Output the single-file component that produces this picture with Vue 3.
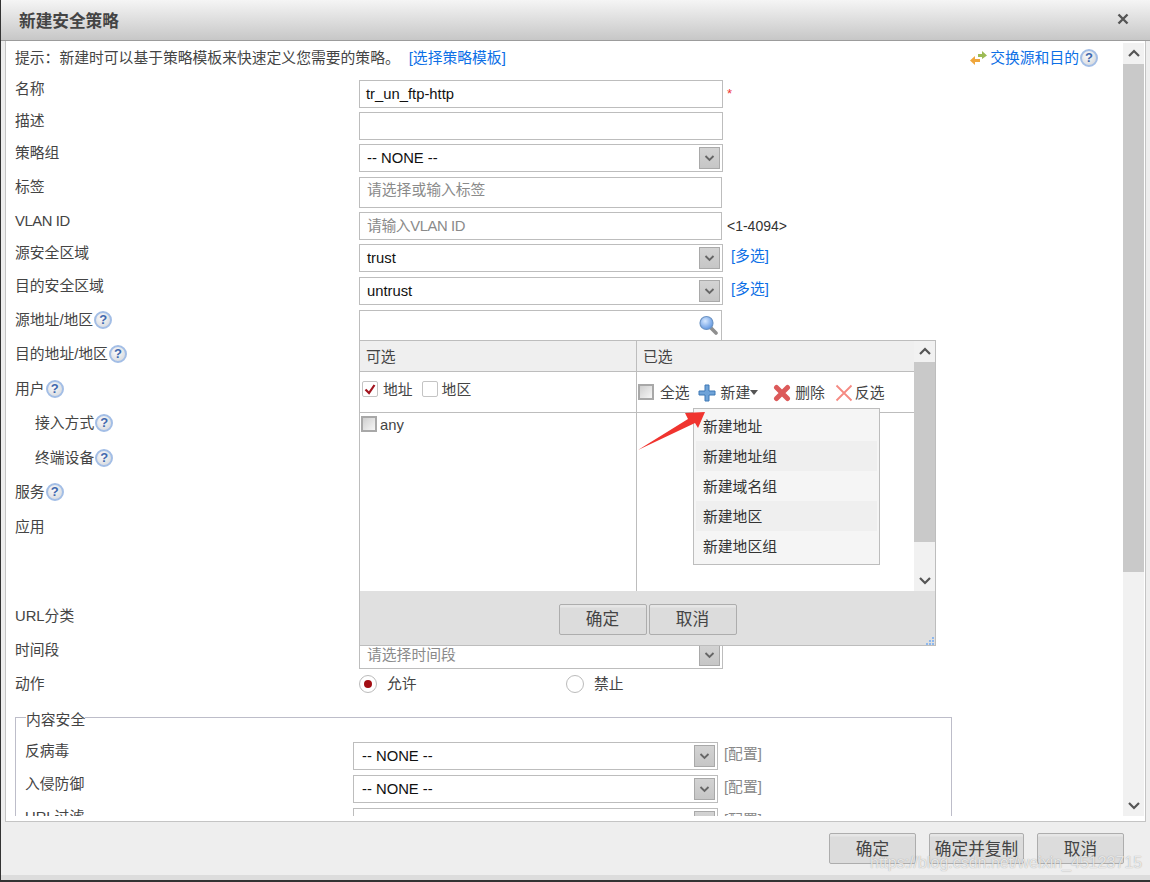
<script setup>
const rows = [
  { label: '名称', h: 32, type: 'input', value: 'tr_un_ftp-http', star: true },
  { label: '描述', h: 32, type: 'input', value: '' },
  { label: '策略组', h: 33, type: 'select', value: '-- NONE --' },
  { label: '标签', h: 35, type: 'tall', placeholder: '请选择或输入标签', low: true },
  { label: 'VLAN ID', h: 32, type: 'short', placeholder: '请输入VLAN ID', note: '<1-4094>', tight: true },
  { label: '源安全区域', h: 33, type: 'select', value: 'trust', multi: true },
  { label: '目的安全区域', h: 33, type: 'select', value: 'untrust', multi: true },
  { label: '源地址/地区', h: 35, type: 'search', help: true, low: true },
  { label: '目的地址/地区', h: 35, help: true },
  { label: '用户', h: 34, help: true },
  { label: '接入方式', h: 35, help: true, indent: true },
  { label: '终端设备', h: 34, help: true, indent: true },
  { label: '服务', h: 35, help: true },
  { label: '应用', h: 89 },
  { label: 'URL分类', h: 34 },
  { label: '时间段', h: 34, type: 'select', placeholder: '请选择时间段' },
  { label: '动作', h: 35, type: 'radio' }
]
const security = [
  { label: '反病毒', value: '-- NONE --' },
  { label: '入侵防御', value: '-- NONE --' },
  { label: 'URL过滤', value: '' }
]
const menu = ['新建地址', '新建地址组', '新建域名组', '新建地区', '新建地区组']
</script>

<template>
  <div class="dialog">
    <header class="title">
      <span>新建安全策略</span>
      <svg class="close" width="12" height="12" viewBox="0 0 12 12"><path d="M1.5 1.5l9 9M10.5 1.5l-9 9" stroke="#555" stroke-width="2.4" /></svg>
    </header>

    <div class="body">
      <div class="scroll">
        <div class="hint">
          <span>提示：新建时可以基于策略模板来快速定义您需要的策略。<a class="link tpl">[选择策略模板]</a></span>
          <span class="swap">
            <svg width="19" height="16" viewBox="0 0 19 16">
              <path d="M9 4h4V1l5 4.500-5 3.500V7H9z" fill="#9dbb55" />
              <path d="M11 9H6V6L1 10.500 6 15v-3h5z" fill="#efa63c" />
            </svg>
            <a class="link">交换源和目的</a><i class="help">?</i>
          </span>
        </div>

        <div v-for="row in rows" :key="row.label" class="row" :style="{ height: row.h + 'px' }">
          <div class="label" :class="{ low: row.low, indent: row.indent, tight: row.tight }">{{ row.label }}<i v-if="row.help" class="help">?</i></div>

          <template v-if="row.type === 'input'">
            <div class="box wide">{{ row.value }}</div>
            <span v-if="row.star" class="star">*</span>
          </template>

          <template v-else-if="row.type === 'select'">
            <div class="box wide select" :class="{ ph: row.placeholder }">
              {{ row.value || row.placeholder }}
              <span class="drop"><svg width="11" height="7" viewBox="0 0 11 7"><path d="M1.500 1l4 4 4-4" fill="none" stroke="#666" stroke-width="1.800" /></svg></span>
            </div>
            <a v-if="row.multi" class="link multi">[多选]</a>
          </template>

          <div v-else-if="row.type === 'tall'" class="box narrow tall ph">{{ row.placeholder }}</div>

          <template v-else-if="row.type === 'short'">
            <div class="box narrow ph tight">{{ row.placeholder }}</div>
            <span class="note">{{ row.note }}</span>
          </template>

          <div v-else-if="row.type === 'search'" class="box narrow tall searchbox">
            <svg width="21" height="20" viewBox="0 0 21 20">
              <defs><radialGradient id="lens" cx="0.4" cy="0.35" r="0.7"><stop offset="0" stop-color="#d6e8ff" /><stop offset="1" stop-color="#5b93e0" /></radialGradient></defs>
              <path d="M13 13l5 5" stroke="#8f8f8f" stroke-width="3.600" stroke-linecap="round" />
              <circle cx="8.500" cy="8" r="6.500" fill="url(#lens)" stroke="#6d94c4" stroke-width="1.200" />
            </svg>
          </div>

          <div v-else-if="row.type === 'radio'" class="radios">
            <span class="radio-item first"><i class="radio on"></i>允许</span>
            <span class="radio-item"><i class="radio"></i>禁止</span>
          </div>
        </div>

        <fieldset class="security">
          <legend>内容安全</legend>
          <div v-for="item in security" :key="item.label" class="sec-row">
            <div class="sec-label">{{ item.label }}</div>
            <div class="box sec-select select">
              {{ item.value }}
              <span class="drop"><svg width="11" height="7" viewBox="0 0 11 7"><path d="M1.500 1l4 4 4-4" fill="none" stroke="#666" stroke-width="1.800" /></svg></span>
            </div>
            <span class="config">[配置]</span>
          </div>
        </fieldset>
      </div>

      <div class="bar">
        <span class="arrow"><svg width="14" height="9" viewBox="0 0 14 9"><path d="M2 7l5-5 5 5" fill="none" stroke="#555" stroke-width="2.200" /></svg></span>
        <span class="thumb"></span>
        <span class="track"></span>
        <span class="arrow"><svg width="14" height="9" viewBox="0 0 14 9"><path d="M2 2l5 5 5-5" fill="none" stroke="#555" stroke-width="2.200" /></svg></span>
      </div>
    </div>

    <footer class="footer">
      <button class="btn w87">确定</button>
      <button class="btn w95">确定并复制</button>
      <button class="btn w87">取消</button>
    </footer>

    <div class="popup">
      <div class="pop-main">
        <div class="pop-table">
          <div class="pop-cell head">可选</div>
          <div class="pop-cell head split">已选</div>
          <div class="pop-cell tools-left">
            <i class="check red">
              <svg width="12" height="11" viewBox="0 0 12 11"><path d="M1.500 5.500l3.500 3.500 5.500-8" fill="none" stroke="#a3151f" stroke-width="2.200" /></svg>
            </i>
            <span class="t-addr">地址</span>
            <i class="check"></i>
            <span class="t-area">地区</span>
          </div>
          <div class="pop-cell split tools-right">
            <i class="check gray"></i>
            <span class="t-all">全选</span>
            <svg class="i-plus" width="18" height="18" viewBox="0 0 18 18"><path d="M7 1h4v6h6v4h-6v6H7v-6H1V7h6z" fill="#6fa3d8" stroke="#3f79b5" stroke-width="1" /></svg>
            <span>新建</span><i class="caret"></i>
            <svg class="i-del" width="18" height="18" viewBox="0 0 18 18"><path d="M3.500 3.500l11 11M14.500 3.500l-11 11" stroke="#dc5a5a" stroke-width="5" stroke-linecap="round" /></svg>
            <span class="t-del">删除</span>
            <svg class="i-x" width="18" height="18" viewBox="0 0 18 18"><path d="M1.500 1.500l15 15M16.500 1.500l-15 15" stroke="#f58a82" stroke-width="1.800" /></svg>
            <span class="t-inv">反选</span>
          </div>
          <div class="pop-cell list">
            <i class="check gray"></i><span class="any">any</span>
          </div>
          <div class="pop-cell split"></div>
        </div>
        <div class="bar pop-bar">
          <span class="arrow"><svg width="14" height="9" viewBox="0 0 14 9"><path d="M2 7l5-5 5 5" fill="none" stroke="#555" stroke-width="2.200" /></svg></span>
          <span class="thumb"></span>
          <span class="track"></span>
          <span class="arrow"><svg width="14" height="9" viewBox="0 0 14 9"><path d="M2 2l5 5 5-5" fill="none" stroke="#555" stroke-width="2.200" /></svg></span>
        </div>
      </div>
      <div class="pop-foot">
        <button class="btn w88">确定</button>
        <button class="btn w88">取消</button>
        <svg class="grip" width="9" height="8" viewBox="0 0 9 8"><path d="M6 0h2v2H6zM3 3h2v2H3zM6 3h2v2H6zM0 6h2v2H0zM3 6h2v2H3zM6 6h2v2H6z" fill="#8db8ee" /></svg>
      </div>

      <ul class="menu">
        <li v-for="item in menu" :key="item">{{ item }}</li>
      </ul>
    </div>

    <svg class="pointer" width="70" height="42" viewBox="0 0 70 42">
      <path d="M0 40L50 9 47 3 67 2 60 18 57 13z" fill="#f0342f" />
    </svg>

    <div class="watermark">https://blog.csdn.net/weixin_45123715</div>
  </div>
</template>

<style scoped>
.dialog {
  position: relative;
  width: 1149px;
  height: 880px;
  margin-left: 1px;
  display: flex;
  flex-direction: column;
  background: #eeeeee;
  font-family: "Liberation Sans", "Noto Sans CJK SC", sans-serif;
  font-size: 14.8px;
  color: #444;
  overflow: hidden;
}
.title {
  box-sizing: border-box;
  height: 41px;
  flex: none;
  padding: 0 21px 0 18px;
  display: flex;
  align-items: center;
  justify-content: space-between;
  background: linear-gradient(#f5f5f5, #c7c7c7);
  border-bottom: 1px solid #9c9c9c;
  font-size: 16.67px;
  font-weight: 700;
  color: #444;
}
.close { margin-top: -2px; }
.body {
  box-sizing: border-box;
  height: 781px;
  flex: none;
  margin: 0 4px 0 4px;
  display: flex;
  background: #fff;
  border: solid #c4c4c4;
  border-width: 0 1px 1px 1px;
  padding-bottom: 5px;
}
.scroll {
  width: 1117px;
  flex: none;
  height: 775px;
  overflow: hidden;
  padding-left: 9px;
  box-sizing: border-box;
}
.bar {
  width: 21px;
  flex: none;
  margin-top: 2px;
  display: flex;
  flex-direction: column;
  background: #f1f1f1;
}
.arrow {
  height: 21px;
  flex: none;
  display: flex;
  align-items: center;
  justify-content: center;
  background: #f1f1f1;
}
.thumb { height: 508px; flex: none; background: #c9c9c9; }
.track { flex: 1; }

.hint {
  height: 31px;
  padding-top: 8px;
  padding-right: 25px;
  display: flex;
  justify-content: space-between;
  line-height: 18px;
}
.link { color: #0c6fe6; }
.tpl { margin-left: 9px; }
.swap { display: flex; align-items: center; align-self: flex-start; }
.swap svg { margin-right: 2px; }

.row { display: flex; align-items: flex-start; }
.label {
  width: 344px;
  flex: none;
  box-sizing: border-box;
  line-height: 18px;
  display: flex;
  align-items: center;
}
.label.low { margin-top: 1px; }
.label.indent { padding-left: 20px; }
.tight { letter-spacing: -0.4px; }
.help {
  box-sizing: border-box;
  width: 18px;
  height: 18px;
  flex: none;
  margin-left: 1px;
  border: 2px solid #a3bee6;
  border-radius: 50%;
  background: radial-gradient(circle at 40% 35%, #fbfbfb, #cfd3d9);
  color: #3f68ae;
  font: 700 13px/14px "Liberation Sans", sans-serif;
  font-style: normal;
  letter-spacing: 0;
  text-align: center;
}
.box {
  box-sizing: border-box;
  position: relative;
  height: 28px;
  border: 1px solid #bdbdbd;
  padding: 0 6px;
  line-height: 26px;
  color: #111;
  background: #fff;
}
.wide { width: 364px; }
.narrow { width: 363px; padding: 0 7px; }
.tall { height: 31px; line-height: 24px; }
.ph { color: #8a8a8a; }
.select { padding: 0 7px; }
.drop {
  position: absolute;
  right: 2px;
  top: 2px;
  bottom: 2px;
  width: 21px;
  box-sizing: border-box;
  display: flex;
  align-items: center;
  justify-content: center;
  background: linear-gradient(#d3d3d3, #c6c6c6);
  border: 1px solid #a9a9a9;
}
.star { color: #e33; margin: 5px 0 0 4px; font-size: 13px; line-height: 18px; }
.multi { margin: 3px 0 0 8px; line-height: 18px; }
.note { margin: 5px 0 0 5px; font-size: 14px; line-height: 18px; color: #333; }
.searchbox { display: flex; justify-content: flex-end; align-items: flex-start; padding: 4px 2px 0 0; }
.radios { display: flex; line-height: 18px; }
.radio-item { display: flex; align-items: center; color: #444; }
.radio-item.first { width: 207px; }
.radio {
  box-sizing: border-box;
  width: 18px;
  height: 18px;
  margin-right: 10px;
  border: 1px solid #bbb;
  border-radius: 50%;
  background: #fff;
  display: flex;
  align-items: center;
  justify-content: center;
}
.radio.on::after {
  content: "";
  width: 8px;
  height: 8px;
  border-radius: 50%;
  background: #a30d13;
}

.security {
  box-sizing: border-box;
  width: 937px;
  margin: 0;
  padding: 18px 0 0 9px;
  border: 1px solid #bdbdc9;
  min-inline-size: 0;
}
.security legend {
  padding: 0;
  margin-left: 1px;
  height: 14px;
  line-height: 20px;
  background: #fff;
}
.sec-row { display: flex; height: 33px; align-items: flex-start; }
.sec-label { width: 328px; flex: none; line-height: 18px; }
.sec-select { width: 365px; flex: none; padding: 0 8px; }
.config { margin: 3px 0 0 6px; line-height: 18px; color: #888; }

.footer {
  flex: none;
  height: 53px;
  padding: 11px 26px 0 0;
  box-sizing: border-box;
  display: flex;
  justify-content: flex-end;
  align-items: flex-start;
  gap: 13px;
}
.dialog::after {
  content: "";
  position: absolute;
  left: 0;
  right: 0;
  bottom: 0;
  height: 5px;
  background: #dcdcdc;
}
.btn {
  box-sizing: border-box;
  height: 31px;
  padding: 0;
  border: 1px solid #adadad;
  border-radius: 2px;
  background: linear-gradient(#e6e6e6 0, #e6e6e6 2px, #dcdcdc 3px);
  font: 16.67px/1 "Liberation Sans", "Noto Sans CJK SC", sans-serif;
  color: #444;
}
.w87 { width: 87px; padding-top: 4px; }
.w95 { width: 95px; padding-top: 4px; }
.w88 { width: 88px; padding-top: 2px; }

.popup {
  position: absolute;
  left: 358px;
  top: 340px;
  box-sizing: border-box;
  width: 577px;
  height: 306px;
  display: flex;
  flex-direction: column;
  border: 1px solid #bdbdbd;
  background: #fff;
}
.pop-main { display: flex; height: 250px; flex: none; }
.pop-table {
  flex: 1;
  display: grid;
  grid-template-columns: 276px 1fr;
  grid-template-rows: 31px 41px 1fr;
}
.pop-cell { box-sizing: border-box; min-width: 0; }
.split { border-left: 1px solid #bdbdbd; }
.head {
  background: #efefef;
  border-bottom: 1px solid #bdbdbd;
  line-height: 32px;
  padding-left: 6px;
}
.tools-left, .tools-right {
  display: flex;
  border-bottom: 1px solid #bdbdbd;
  line-height: 18px;
}
.tools-left { padding: 9px 0 0 2px; }
.t-addr { margin: 0 9px 0 5px; }
.t-area { margin-left: 4px; }
.tools-right { padding: 12px 0 0 1px; position: relative; }
.t-all { margin: 0 8px 0 6px; }
.i-plus { margin: 0 5px 0 0; }
.i-del { margin: 0 4px 0 15px; }
.i-x { margin: 0 2px 0 10px; }
.check {
  box-sizing: border-box;
  width: 16px;
  height: 16px;
  flex: none;
  display: flex;
  align-items: center;
  justify-content: center;
  border: 1px solid #c4c4c4;
  border-radius: 2px;
  background: #fff;
}
.check.gray {
  border: 2px solid #a8a8a8;
  border-radius: 0;
  background: linear-gradient(135deg, #cfcfcf, #f6f6f6);
}
.caret {
  width: 0;
  height: 0;
  margin-top: 6px;
  border: solid transparent;
  border-width: 5px 4px 0;
  border-top-color: #555;
}
.list { display: flex; padding: 3px 0 0 1px; align-items: flex-start; line-height: 18px; }
.any { margin-left: 3px; }
.pop-bar { margin-top: 0; }
.pop-bar .thumb { height: 180px; }
.pop-foot {
  position: relative;
  flex: 1;
  background: #e0e0e0;
  display: flex;
  align-items: flex-start;
  justify-content: center;
  gap: 2px;
  padding-top: 13px;
  box-sizing: border-box;
}
.grip { position: absolute; right: 0; bottom: 0; }
.menu {
  position: absolute;
  left: 333px;
  top: 67px;
  box-sizing: border-box;
  width: 187px;
  height: 157px;
  margin: 0;
  padding: 2px 2px 0;
  list-style: none;
  background: #f5f5f5;
  border: 1px solid #bdbdbd;
}
.menu li {
  height: 30px;
  line-height: 32px;
  padding-left: 7px;
  color: #333;
  background: #f5f5f5;
}
.menu li:nth-child(even) { background: #efefef; }
.pointer { position: absolute; left: 637px; top: 410px; }
.watermark {
  position: absolute;
  left: 869px;
  top: 854px;
  font-size: 16px;
  line-height: 18px;
  white-space: nowrap;
  color: rgba(255, 255, 255, 0.75);
  text-shadow: 0 0 1px rgba(90, 90, 90, 0.6);
}
</style>

<style>
html, body { margin: 0; background: #333; }
</style>
